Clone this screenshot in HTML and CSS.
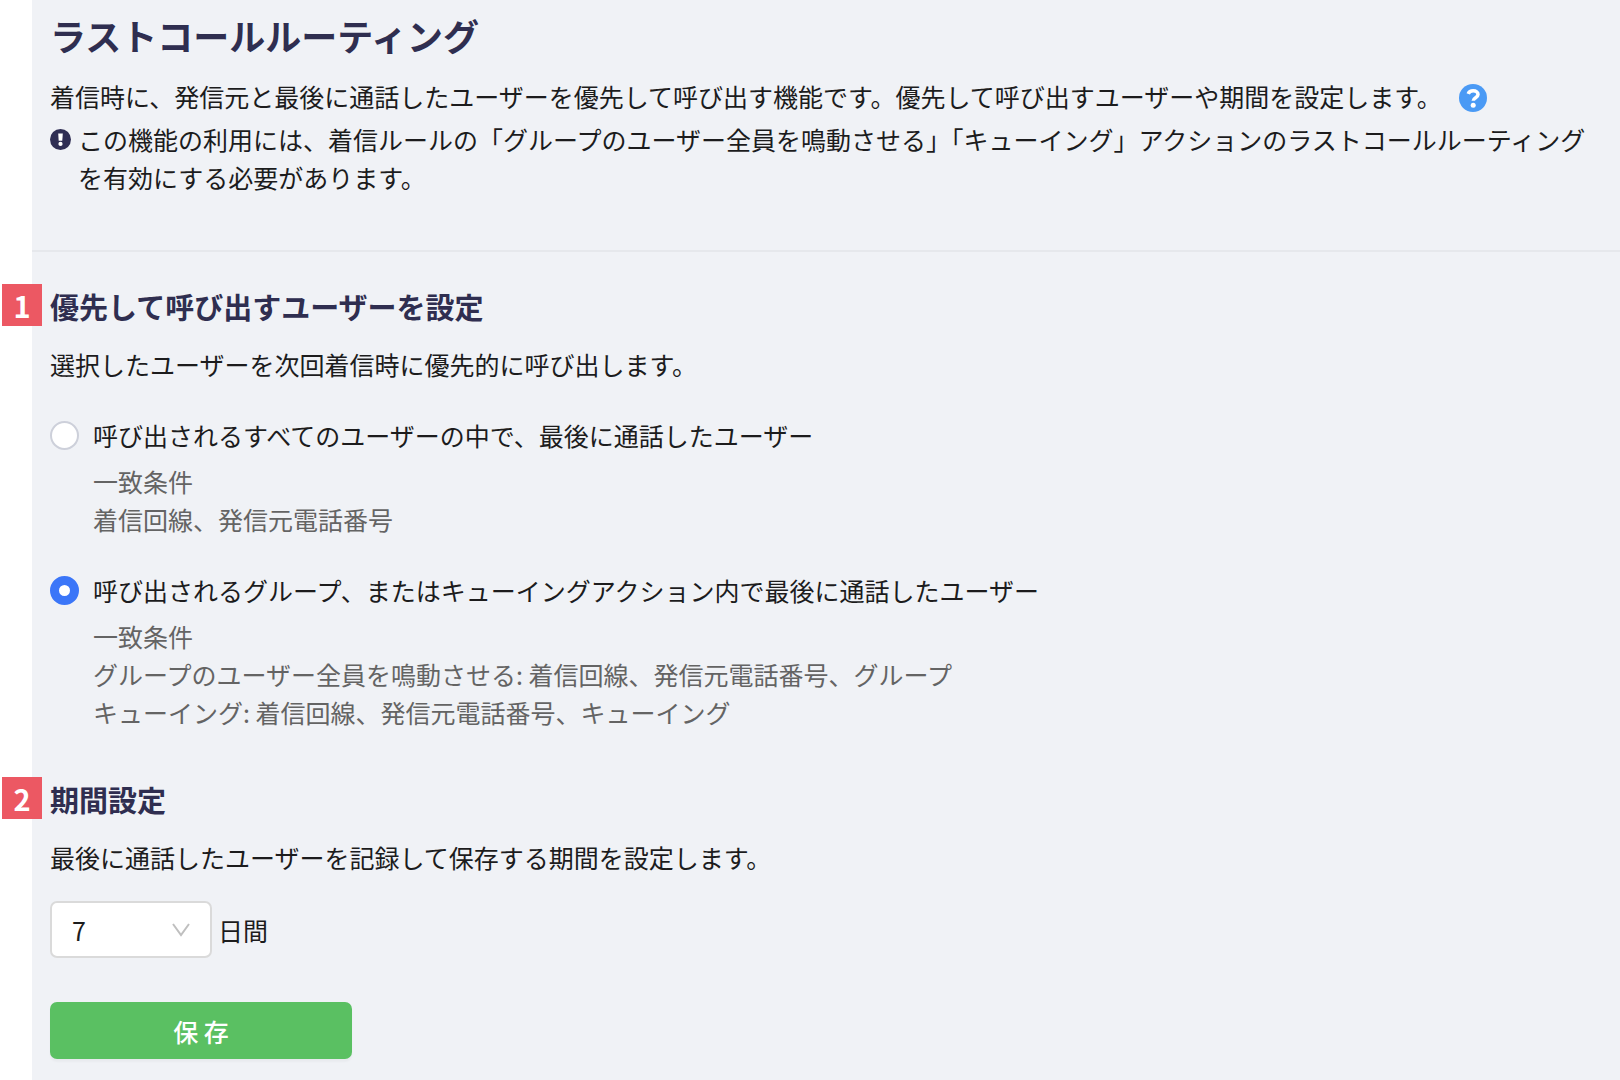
FILE: index.html
```html
<!DOCTYPE html>
<html lang="ja">
<head>
    <meta charset="UTF-8">
    <meta name="viewport" content="width=device-width, initial-scale=1.0">
    <title>ラストコールルーティング</title>
    <link rel="stylesheet" href="styles.css">
</head>
<body>

<main class="panel">
    <header class="page-header">
        <h1>ラストコールルーティング</h1>
        <p class="lead">
            <span>着信時に、発信元と最後に通話したユーザーを優先して呼び出す機能です。優先して呼び出すユーザーや期間を設定します。</span>
            <a class="help" href="#" aria-label="ヘルプ">
                <svg viewBox="0 0 28 28" width="28" height="28">
                    <circle cx="14" cy="14" r="14" fill="#4a9af5"/>
                    <path d="M9.200 9.800C10 7.800 11.800 6.800 14.200 6.800c2.800 0 4.800 1.500 4.800 3.800 0 3.300-4.700 3-4.700 6.200" fill="none" stroke="#fff" stroke-width="3.600"/>
                    <circle cx="14.200" cy="21.200" r="2.500" fill="#fff"/>
                </svg>
            </a>
        </p>
        <div class="notice">
            <svg class="notice-icon" viewBox="0 0 20 20" width="21" height="21">
                <circle cx="10" cy="10" r="10" fill="#2f2e54"/>
                <path d="M7.800 4.200h4.400l-.5 7h-3.400z" fill="#fff"/>
                <circle cx="10" cy="14.200" r="2" fill="#fff"/>
            </svg>
            <p>この機能の利用には、着信ルールの「グループのユーザー全員を鳴動させる」「キューイング」アクションのラストコールルーティングを有効にする必要があります。</p>
        </div>
    </header>

    <form class="settings">
        <section class="section">
            <h2><span class="badge">1</span>優先して呼び出すユーザーを設定</h2>
            <p>選択したユーザーを次回着信時に優先的に呼び出します。</p>

            <div class="option">
                <input type="radio" name="target" id="target-all" value="all">
                <div>
                    <label for="target-all">呼び出されるすべてのユーザーの中で、最後に通話したユーザー</label>
                    <p class="condition">一致条件<br>着信回線、発信元電話番号</p>
                </div>
            </div>

            <div class="option">
                <input type="radio" name="target" id="target-group" value="group" checked>
                <div>
                    <label for="target-group">呼び出されるグループ、またはキューイングアクション内で最後に通話したユーザー</label>
                    <p class="condition">一致条件<br>グループのユーザー全員を鳴動させる: 着信回線、発信元電話番号、グループ<br>キューイング: 着信回線、発信元電話番号、キューイング</p>
                </div>
            </div>
        </section>

        <section class="section">
            <h2><span class="badge">2</span>期間設定</h2>
            <p>最後に通話したユーザーを記録して保存する期間を設定します。</p>

            <div class="period">
                <div class="select-wrap">
                    <select id="period">
                        <option>1</option>
                        <option selected>7</option>
                        <option>14</option>
                        <option>30</option>
                    </select>
                    <svg class="arrow" viewBox="0 0 18 14" width="18" height="14">
                        <path d="M1 1l8 11 8-11" fill="none" stroke="#bfbfbf" stroke-width="2"/>
                    </svg>
                </div>
                <label for="period">日間</label>
            </div>
        </section>

        <button class="save" type="button">保 存</button>
    </form>
</main>

</body>
</html>
```

FILE: styles.css
```css
* {
    box-sizing: border-box;
}
body {
    margin: 0;
    background-color: white;
    color: #1c1c1d;
    font-family: "Noto Sans CJK JP", sans-serif;
    font-size: 25px;
    line-height: 38px;
}
h1, h2, p {
    margin: 0;
}
.panel {
    margin-left: 32px;
    min-height: 100vh;
    background-color: #f0f2f6;
}
.page-header {
    padding: 8px 16px 54px 18px;
    border-bottom: 2px solid #e6e8ec;
}
h1 {
    color: #2f2e50;
    font-size: 36px;
    line-height: 54px;
}
.lead {
    display: flex;
    align-items: center;
    gap: 17px;
    margin-top: 15px;
}
.help {
    display: flex;
    flex-shrink: 0;
    margin-top: 4px;
}
.notice {
    display: flex;
    gap: 7px;
    margin-top: 5px;
}
.notice-icon {
    flex-shrink: 0;
    margin-top: 9px;
}
.settings {
    padding: 32px 16px 16px 18px;
}
.section + .section {
    margin-top: 46px;
}
h2 {
    position: relative;
    margin-bottom: 17px;
    color: #2f2e50;
    font-size: 29px;
    line-height: 44px;
}
/* 見出しの左、パネルの端に重なる番号 */
.badge {
    position: absolute;
    top: 0;
    left: -48px;
    width: 40px;
    height: 42px;
    background-color: #ec5863;
    color: white;
    line-height: 42px;
    text-align: center;
}
.option {
    display: flex;
    gap: 14px;
    margin-top: 33px;
}
.option input {
    flex-shrink: 0;
    appearance: none;
    width: 29px;
    height: 29px;
    margin: 5px 0 0;
    border: 2px solid #cdd0da;
    border-radius: 50%;
    background-color: white;
}
.option input:checked {
    border: 9px solid #3b76f8;
}
.option label {
    display: block;
}
.condition {
    margin-top: 8px;
    color: #646464;
}
.period {
    display: flex;
    align-items: center;
    gap: 6px;
    margin-top: 25px;
}
.select-wrap {
    position: relative;
    width: 162px;
}
.select-wrap select {
    display: block;
    appearance: none;
    width: 100%;
    height: 57px;
    padding: 0 20px;
    border: 2px solid #dadada;
    border-radius: 7px;
    background-color: white;
    color: inherit;
    font: inherit;
}
.arrow {
    position: absolute;
    top: 22px;
    right: 22px;
    pointer-events: none;
}
.save {
    display: block;
    width: 302px;
    height: 57px;
    margin-top: 44px;
    padding: 0;
    border: none;
    border-radius: 7px;
    background-color: #5ac062;
    box-shadow: 0 3px 2px rgba(0, 0, 0, 0.03);
    color: white;
    font: inherit;
    font-weight: 500;
    cursor: pointer;
}
```
